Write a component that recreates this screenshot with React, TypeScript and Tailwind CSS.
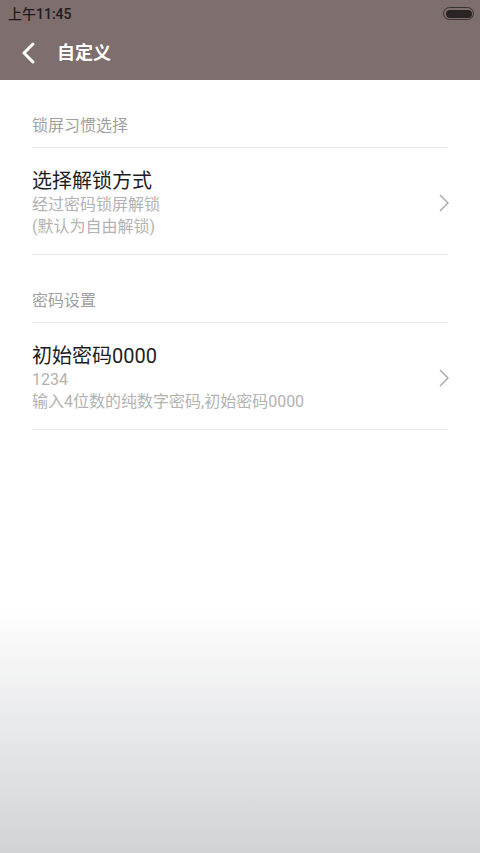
interface Item {
	title: string;
	lines: string[];
}

interface Section {
	header: string;
	items: Item[];
}

const sections: Section[] = [
	{
		header: "锁屏习惯选择",
		items: [
			{
				title: "选择解锁方式",
				lines: ["经过密码锁屏解锁", "(默认为自由解锁)"],
			},
		],
	},
	{
		header: "密码设置",
		items: [
			{
				title: "初始密码0000",
				lines: ["1234", "输入4位数的纯数字密码,初始密码0000"],
			},
		],
	},
];

const font = {
	fontFamily: `Roboto, "Noto Sans CJK SC", sans-serif`,
};

export default function App() {
	return (
		<div
			style={font}
			className="w-[480px] min-h-[853px] bg-linear-to-b from-white from-[71%] to-[#d2d3d6]"
		>
			{/* Status + title bar */}
			<div className="bg-[#7e6e6d] h-[80px]">
				<div className="h-[27px] flex items-center justify-between pl-[8px] pr-[6px]">
					<span className="text-[14px] leading-none font-medium text-[#221c1c]">
						上午11:45
					</span>
					<div className="w-[31px] h-[13px] rounded-full border border-[#3a3232] p-[1.5px]">
						<div className="w-full h-full rounded-full bg-[#2a2424]" />
					</div>
				</div>
				<div className="h-[53px] flex items-center pl-[21px] pb-[1px]">
					<svg
						width="16"
						height="22"
						viewBox="0 0 16 22"
						fill="none"
						stroke="white"
						strokeWidth="3"
						strokeLinecap="round"
						strokeLinejoin="round"
					>
						<path d="M12 2 L3 11 L12 20" />
					</svg>
					<span className="ml-[20px] text-[18px] font-bold text-white leading-none">
						自定义
					</span>
				</div>
			</div>

			{/* Settings list */}
			<div className="px-[32px]">
				{sections.map((section) => (
					<div key={section.header}>
						<div className="h-[68px] flex items-end pb-[12px] border-b border-[#e8e8e8]">
							<span className="text-[16px] leading-[18px] text-[#a0a0a0]">
								{section.header}
							</span>
						</div>
						{section.items.map((item) => (
							<div
								key={item.title}
								className="flex items-center justify-between pt-[20px] pb-[16px] border-b border-[#e8e8e8]"
							>
								<div>
									<p className="text-[20px] leading-[26px] text-[#1e1e1e]">
										{item.title}
									</p>
									{item.lines.map((line) => (
										<p
											key={line}
											className="text-[16px] leading-[22px] text-[#b2b2b2]"
										>
											{line}
										</p>
									))}
								</div>
								<svg
									width="10"
									height="18"
									viewBox="0 0 10 18"
									fill="none"
									stroke="#a4a4a4"
									strokeWidth="1.3"
									className="mr-[-1px]"
								>
									<path d="M1 1 L9 9 L1 17" />
								</svg>
							</div>
						))}
					</div>
				))}
			</div>
		</div>
	);
}
